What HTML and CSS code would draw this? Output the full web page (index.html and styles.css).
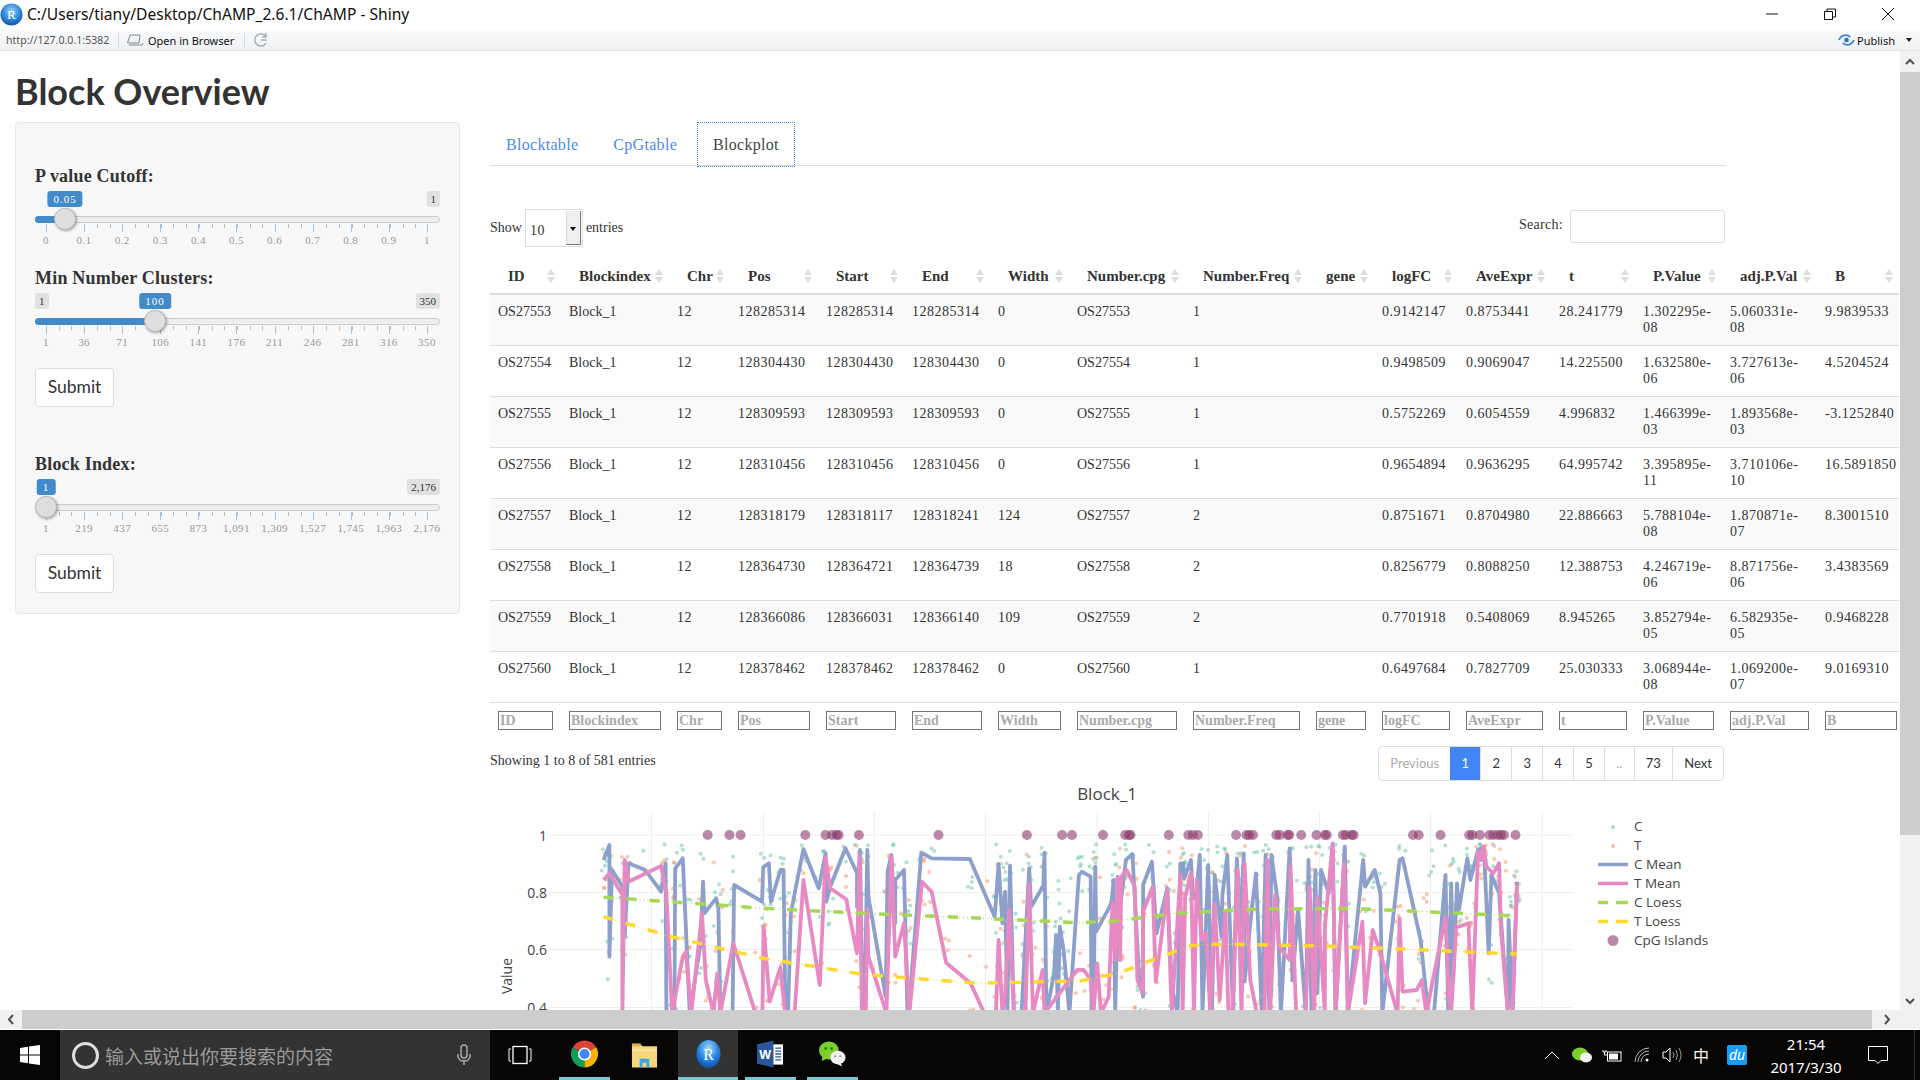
FILE: index.html
```html
<!DOCTYPE html>
<html lang="en">
<head>
    <meta charset="UTF-8">
    <title>ChAMP - Shiny</title>
    <link rel="stylesheet" href="styles.css">
</head>
<body>
    <!-- window chrome -->
    <div class="titlebar">
        <svg class="r-logo" viewBox="0 0 24 24"><defs><radialGradient id="rball" cx="50%" cy="35%" r="65%"><stop offset="0" stop-color="#9fd4f7"/><stop offset="0.6" stop-color="#2f86dc"/><stop offset="1" stop-color="#1553a8"/></radialGradient></defs><circle cx="12" cy="12" r="11.500" fill="url(#rball)"/><text x="12" y="17" text-anchor="middle" font-size="14" fill="#fff" font-family="Liberation Serif">R</text></svg>
        <span class="window-title">C:/Users/tiany/Desktop/ChAMP_2.6.1/ChAMP - Shiny</span>
        <div class="window-controls">
            <svg viewBox="0 0 14 14"><path d="M1 7h12" stroke="#111" stroke-width="1"/></svg>
            <svg viewBox="0 0 14 14"><path d="M1.500 4.500h8v8h-8zM4 4.500V2h8.500v8H9.500" fill="none" stroke="#111" stroke-width="1"/></svg>
            <svg viewBox="0 0 14 14"><path d="M1 1l12 12M13 1L1 13" stroke="#111" stroke-width="1"/></svg>
        </div>
    </div>
    <div class="toolbar">
        <span class="url">http://127.0.0.1:5382</span>
        <span class="tool-sep"></span>
        <svg class="tool-icon" viewBox="0 0 18 14"><path d="M4 2h10l-1 8H1.500zM3 12h13l1-2" fill="#eef2f6" stroke="#7d8a99" stroke-width="1"/></svg>
        <span class="tool-label">Open in Browser</span>
        <span class="tool-sep"></span>
        <svg class="tool-refresh" viewBox="0 0 16 16"><path d="M13 11a6 6 0 1 1 0-6M13 1v4H9" fill="none" stroke="#a4afbb" stroke-width="1.500"/><path d="M14 8H8" stroke="#a4afbb" stroke-width="1.500"/></svg>
        <div class="publish">
            <svg viewBox="0 0 18 12"><path d="M1 6c2-5 8-7 12-3M17 6c-2 5-8 7-12 3" fill="none" stroke="#4a86d4" stroke-width="1.800"/><circle cx="9" cy="6" r="2.500" fill="#2a6fd0"/></svg>
            <span>Publish</span>
            <i class="publish-caret"></i>
        </div>
    </div>

    <div class="window-body">
        <div class="viewport">
            <h1>Block Overview</h1>
            <div class="layout">
                <!-- sidebar -->
                <div class="well">
                    <div class="group first">
                        <label>P value Cutoff:</label>
                        <div class="slider">
                            <span class="tag max">1</span>
                            <span class="tag current" style="left:30px">0.05</span>
                            <div class="track"><div class="bar" style="width:30px"></div></div>
                            <div class="scale">
                                <span class="tick"><b>0</b></span><span class="tick"><b>0.1</b></span><span class="tick"><b>0.2</b></span><span class="tick"><b>0.3</b></span><span class="tick"><b>0.4</b></span><span class="tick"><b>0.5</b></span><span class="tick"><b>0.6</b></span><span class="tick"><b>0.7</b></span><span class="tick"><b>0.8</b></span><span class="tick"><b>0.9</b></span><span class="tick"><b>1</b></span>
                            </div>
                            <div class="handle" style="left:30px"></div>
                        </div>
                    </div>
                    <div class="group">
                        <label>Min Number Clusters:</label>
                        <div class="slider">
                            <span class="tag min">1</span>
                            <span class="tag max">350</span>
                            <span class="tag current" style="left:120px">100</span>
                            <div class="track"><div class="bar" style="width:120px"></div></div>
                            <div class="scale">
                                <span class="tick"><b>1</b></span><span class="tick"><b>36</b></span><span class="tick"><b>71</b></span><span class="tick"><b>106</b></span><span class="tick"><b>141</b></span><span class="tick"><b>176</b></span><span class="tick"><b>211</b></span><span class="tick"><b>246</b></span><span class="tick"><b>281</b></span><span class="tick"><b>316</b></span><span class="tick"><b>350</b></span>
                            </div>
                            <div class="handle" style="left:120px"></div>
                        </div>
                        <button class="submit">Submit</button>
                    </div>
                    <div class="group wide-top">
                        <label>Block Index:</label>
                        <div class="slider">
                            <span class="tag max">2,176</span>
                            <span class="tag current" style="left:11px">1</span>
                            <div class="track"></div>
                            <div class="scale">
                                <span class="tick"><b>1</b></span><span class="tick"><b>219</b></span><span class="tick"><b>437</b></span><span class="tick"><b>655</b></span><span class="tick"><b>873</b></span><span class="tick"><b>1,091</b></span><span class="tick"><b>1,309</b></span><span class="tick"><b>1,527</b></span><span class="tick"><b>1,745</b></span><span class="tick"><b>1,963</b></span><span class="tick"><b>2,176</b></span>
                            </div>
                            <div class="handle" style="left:11px"></div>
                        </div>
                        <button class="submit">Submit</button>
                    </div>
                </div>

                <!-- main panel -->
                <div class="main">
                    <ul class="tabs">
                        <li><a>Blocktable</a></li>
                        <li><a>CpGtable</a></li>
                        <li class="active"><a>Blockplot</a></li>
                    </ul>

                    <div class="dt-top">
                        <div class="dt-length">
                            <span>Show</span>
                            <div class="select"><span>10</span><i class="select-btn"></i></div>
                            <span>entries</span>
                        </div>
                        <div class="dt-search">
                            <span>Search:</span>
                            <div class="search-input"></div>
                        </div>
                    </div>

                    <table class="dt">
                        <colgroup><col><col><col><col><col><col><col><col><col><col><col><col><col><col><col><col></colgroup>
                        <thead>
                            <tr><th>ID</th><th>Blockindex</th><th>Chr</th><th>Pos</th><th>Start</th><th>End</th><th>Width</th><th>Number.cpg</th><th>Number.Freq</th><th>gene</th><th>logFC</th><th>AveExpr</th><th>t</th><th>P.Value</th><th>adj.P.Val</th><th>B</th></tr>
                        </thead>
                        <tbody>
                            <tr><td class="txt">OS27553</td><td class="txt">Block_1</td><td>12</td><td>128285314</td><td>128285314</td><td>128285314</td><td>0</td><td class="txt">OS27553</td><td>1</td><td></td><td>0.9142147</td><td>0.8753441</td><td>28.241779</td><td>1.302295e-08</td><td>5.060331e-08</td><td>9.9839533</td></tr>
                            <tr><td class="txt">OS27554</td><td class="txt">Block_1</td><td>12</td><td>128304430</td><td>128304430</td><td>128304430</td><td>0</td><td class="txt">OS27554</td><td>1</td><td></td><td>0.9498509</td><td>0.9069047</td><td>14.225500</td><td>1.632580e-06</td><td>3.727613e-06</td><td>4.5204524</td></tr>
                            <tr><td class="txt">OS27555</td><td class="txt">Block_1</td><td>12</td><td>128309593</td><td>128309593</td><td>128309593</td><td>0</td><td class="txt">OS27555</td><td>1</td><td></td><td>0.5752269</td><td>0.6054559</td><td>4.996832</td><td>1.466399e-03</td><td>1.893568e-03</td><td>-3.1252840</td></tr>
                            <tr><td class="txt">OS27556</td><td class="txt">Block_1</td><td>12</td><td>128310456</td><td>128310456</td><td>128310456</td><td>0</td><td class="txt">OS27556</td><td>1</td><td></td><td>0.9654894</td><td>0.9636295</td><td>64.995742</td><td>3.395895e-11</td><td>3.710106e-10</td><td>16.5891850</td></tr>
                            <tr><td class="txt">OS27557</td><td class="txt">Block_1</td><td>12</td><td>128318179</td><td>128318117</td><td>128318241</td><td>124</td><td class="txt">OS27557</td><td>2</td><td></td><td>0.8751671</td><td>0.8704980</td><td>22.886663</td><td>5.788104e-08</td><td>1.870871e-07</td><td>8.3001510</td></tr>
                            <tr><td class="txt">OS27558</td><td class="txt">Block_1</td><td>12</td><td>128364730</td><td>128364721</td><td>128364739</td><td>18</td><td class="txt">OS27558</td><td>2</td><td></td><td>0.8256779</td><td>0.8088250</td><td>12.388753</td><td>4.246719e-06</td><td>8.871756e-06</td><td>3.4383569</td></tr>
                            <tr><td class="txt">OS27559</td><td class="txt">Block_1</td><td>12</td><td>128366086</td><td>128366031</td><td>128366140</td><td>109</td><td class="txt">OS27559</td><td>2</td><td></td><td>0.7701918</td><td>0.5408069</td><td>8.945265</td><td>3.852794e-05</td><td>6.582935e-05</td><td>0.9468228</td></tr>
                            <tr><td class="txt">OS27560</td><td class="txt">Block_1</td><td>12</td><td>128378462</td><td>128378462</td><td>128378462</td><td>0</td><td class="txt">OS27560</td><td>1</td><td></td><td>0.6497684</td><td>0.7827709</td><td>25.030333</td><td>3.068944e-08</td><td>1.069200e-07</td><td>9.0169310</td></tr>
                        </tbody>
                        <tfoot>
                            <tr><td><input placeholder="ID"></td><td><input placeholder="Blockindex"></td><td><input placeholder="Chr"></td><td><input placeholder="Pos"></td><td><input placeholder="Start"></td><td><input placeholder="End"></td><td><input placeholder="Width"></td><td><input placeholder="Number.cpg"></td><td><input placeholder="Number.Freq"></td><td><input placeholder="gene"></td><td><input placeholder="logFC"></td><td><input placeholder="AveExpr"></td><td><input placeholder="t"></td><td><input placeholder="P.Value"></td><td><input placeholder="adj.P.Val"></td><td><input placeholder="B"></td></tr>
                        </tfoot>
                    </table>

                    <div class="dt-bottom">
                        <span class="dt-info">Showing 1 to 8 of 581 entries</span>
                        <div class="pager">
                            <a class="off">Previous</a><a class="on">1</a><a>2</a><a>3</a><a>4</a><a>5</a><a class="off">..</a><a>73</a><a>Next</a>
                        </div>
                    </div>

                    <!-- viewBox is in page pixels, series are added by plot.js -->
                    <svg class="plot" viewBox="490 775 1236 250">
                        <g class="grid">
                            <path d="M651.500 812V1025M763.500 812V1025M874.500 812V1025M985.500 812V1025M1097 812V1025M1208.500 812V1025M1319.500 812V1025M1430.500 812V1025M1542 812V1025"/>
                            <path d="M549 835H1573M549 892.500H1573M549 949.500H1573M549 1007.500H1573"/>
                        </g>
                        <text class="plot-title" x="1107" y="800" text-anchor="middle">Block_1</text>
                        <g class="axis" text-anchor="end">
                            <text x="547" y="841">1</text>
                            <text x="547" y="898">0.8</text>
                            <text x="547" y="955">0.6</text>
                            <text x="547" y="1013">0.4</text>
                        </g>
                        <text class="axis" transform="translate(512 976) rotate(-90)" text-anchor="middle">Value</text>
                        <g id="series"></g>
                        <g class="legend">
                            <circle cx="1613" cy="827" r="2" fill="#66c2a5" opacity=".6"/>
                            <circle cx="1613" cy="846" r="2" fill="#fc8d62" opacity=".6"/>
                            <path d="M1598 864.500h30" stroke="#8da0cb" stroke-width="3.500"/>
                            <path d="M1598 883.500h30" stroke="#e78ac3" stroke-width="3.500"/>
                            <path d="M1598 902.500h10M1616 902.500h12" stroke="#a6d854" stroke-width="3.500"/>
                            <path d="M1598 921.500h10M1616 921.500h12" stroke="#ffd92f" stroke-width="3.500"/>
                            <circle cx="1613" cy="940.500" r="5.500" fill="#8e3a6c" opacity=".6"/>
                            <text x="1634" y="831">C</text>
                            <text x="1634" y="850">T</text>
                            <text x="1634" y="868.500">C Mean</text>
                            <text x="1634" y="887.500">T Mean</text>
                            <text x="1634" y="906.500">C Loess</text>
                            <text x="1634" y="925.500">T Loess</text>
                            <text x="1634" y="944.500">CpG Islands</text>
                        </g>
                    </svg>
                </div>
            </div>
        </div>
        <div class="vscroll">
            <svg class="vs-arrow" viewBox="0 0 20 21"><path d="M6 13l4-4 4 4" fill="none" stroke="#505050" stroke-width="2"/></svg>
            <div class="vs-thumb"></div>
            <svg class="vs-arrow down" viewBox="0 0 20 19"><path d="M6 8l4 4 4-4" fill="none" stroke="#505050" stroke-width="2"/></svg>
        </div>
    </div>
    <div class="hscroll">
        <svg class="hs-arrow" viewBox="0 0 22 19"><path d="M13 5l-4 4.500 4 4.500" fill="none" stroke="#505050" stroke-width="2"/></svg>
        <div class="hs-thumb"></div>
        <svg class="hs-arrow right" viewBox="0 0 28 19"><path d="M13 5l4 4.500-4 4.500" fill="none" stroke="#505050" stroke-width="2"/></svg>
    </div>

    <!-- windows taskbar -->
    <div class="taskbar">
        <div class="start">
            <svg viewBox="0 0 20 20"><path d="M0 3l8-1.200V9.500H0zM9 1.600L20 0v9.500H9zM0 10.500h8v7.700L0 17zM9 10.500h11V20L9 18.400z" fill="#fff"/></svg>
        </div>
        <div class="search">
            <i class="cortana"></i>
            <span>输入或说出你要搜索的内容</span>
            <svg class="mic" viewBox="0 0 14 22"><rect x="4" y="1" width="6" height="13" rx="3" fill="none" stroke="#aaa" stroke-width="1.500"/><path d="M1 10v2c0 3 2.500 5 6 5s6-2 6-5v-2M7 17v4" fill="none" stroke="#aaa" stroke-width="1.500"/></svg>
        </div>
        <div class="slot task-view">
            <svg viewBox="0 0 24 20"><rect x="5" y="1.500" width="14" height="17" fill="none" stroke="#fff" stroke-width="1.300"/><path d="M3 4H1v12h2M21 4h2v12h-2" fill="none" stroke="#fff" stroke-width="1"/></svg>
        </div>
        <div class="slot open chrome">
            <svg viewBox="0 0 24 24"><path d="M12 12L1.600 6A12 12 0 0 1 22.400 6z" fill="#db4437"/><path d="M12 12L1.600 6A12 12 0 0 0 12 24z" fill="#0f9d58"/><path d="M12 12L22.400 6A12 12 0 0 1 12 24z" fill="#f4b400"/><circle cx="12" cy="12" r="5.800" fill="#fff"/><circle cx="12" cy="12" r="4.500" fill="#4285f4"/></svg>
        </div>
        <div class="slot folder">
            <svg viewBox="0 0 28 28"><path d="M1 3h9l2 2h15v22H1z" fill="#f5d67c"/><path d="M1 8h26v2H1z" fill="#fbe6a6"/><path d="M9 27V18h10v9h-3v-5h-4v5z" fill="#3fa7e0"/><rect x="1" y="2" width="9" height="3" fill="#e0b040"/></svg>
        </div>
        <div class="slot open active">
            <svg viewBox="0 0 24 28"><defs><radialGradient id="rball2" cx="50%" cy="30%" r="70%"><stop offset="0" stop-color="#a4d8fa"/><stop offset="0.6" stop-color="#2382e2"/><stop offset="1" stop-color="#1250a8"/></radialGradient></defs><ellipse cx="12" cy="14" rx="12" ry="14" fill="url(#rball2)"/><text x="12" y="20" text-anchor="middle" font-size="16" fill="#fff" font-family="Liberation Serif">R</text></svg>
        </div>
        <div class="slot open word">
            <svg viewBox="0 0 28 28"><path d="M0 4l17-4v28L0 24z" fill="#2b579a"/><path d="M17 4h10v21H17z" fill="#fff"/><path d="M19 8h6M19 11h6M19 14h6M19 17h6M19 20h6" stroke="#2b579a" stroke-width="1.300"/><text x="8.500" y="19" text-anchor="middle" font-size="13" font-weight="700" fill="#fff" font-family="Liberation Sans">W</text></svg>
        </div>
        <div class="slot open wechat">
            <svg viewBox="0 0 30 28"><ellipse cx="11" cy="10" rx="11" ry="10" fill="#7bd02e"/><path d="M4 16l-1 6 6-3z" fill="#7bd02e"/><circle cx="7.500" cy="8" r="1.500" fill="#2c6a10"/><circle cx="14" cy="8" r="1.500" fill="#2c6a10"/><ellipse cx="21" cy="18" rx="8.500" ry="7.500" fill="#f2f2f2"/><path d="M24 24l2 4-6-3z" fill="#f2f2f2"/><circle cx="18" cy="16.500" r="1.100" fill="#888"/><circle cx="23.500" cy="16.500" r="1.100" fill="#888"/></svg>
        </div>
        <div class="tray">
            <div class="tray-item"><svg viewBox="0 0 16 9" width="16" height="9"><path d="M1 8l7-7 7 7" fill="none" stroke="#fff" stroke-width="1"/></svg></div>
            <div class="tray-item"><svg viewBox="0 0 20 16" width="20" height="16"><ellipse cx="8" cy="7" rx="8" ry="6.500" fill="#7bd02e"/><ellipse cx="14" cy="10.500" rx="6" ry="5" fill="#f2f2f2"/></svg></div>
            <div class="tray-item"><svg viewBox="0 0 20 13" width="20" height="13"><rect x="5.500" y="3" width="13.500" height="9" fill="#000" stroke="#fff" stroke-width="1"/><rect x="7" y="4.500" width="9" height="6" fill="#fff"/><path d="M1 1v2h3V1M2.500 3v3h3" fill="none" stroke="#fff" stroke-width="1"/></svg></div>
            <div class="tray-item"><svg viewBox="0 0 16 16" width="16" height="16"><path d="M1 15a14 14 0 0 1 14-14M4 15a11 11 0 0 1 11-11M7 15a8 8 0 0 1 8-8" fill="none" stroke="#bbb" stroke-width="1"/><circle cx="13" cy="13" r="1.500" fill="#fff"/></svg></div>
            <div class="tray-item"><svg viewBox="0 0 20 16" width="20" height="16"><path d="M1 5h3l4-4v14l-4-4H1z" fill="none" stroke="#fff" stroke-width="1"/><path d="M11 5q2 3 0 6M14 3q3 5 0 10M17 1q4 7 0 14" fill="none" stroke="#999" stroke-width="1"/></svg></div>
            <div class="tray-item ime">中</div>
            <div class="tray-item du"><span>du</span></div>
            <div class="clock"><span>21:54</span><span>2017/3/30</span></div>
            <div class="tray-item notify"><svg viewBox="0 0 20 18" width="20" height="18"><path d="M.5.500h19v14H13l-3 3-3-3H.5z" fill="none" stroke="#fff" stroke-width="1"/></svg></div>
        </div>
    </div>

    <script src="plot.js"></script>
</body>
</html>
```

FILE: styles.css
```css
/* page */
html, body {
    margin: 0;
    padding: 0;
}

body {
    width: 1920px;
    height: 1080px;
    overflow: hidden;
    display: flex;
    flex-direction: column;
    background: #fff;
    color: #333;
    font-family: "Liberation Serif", serif;
}

/* window title + rstudio toolbar */
.titlebar {
    height: 28px;
    padding-bottom: 2px;
    flex: none;
    display: flex;
    align-items: center;
    font-family: "Noto Sans", sans-serif;
    font-size: 15.600px;
    color: #111;
}

.r-logo {
    width: 23px;
    height: 23px;
}

.window-title {
    margin-left: 4px;
}

.window-controls {
    margin-left: auto;
    display: flex;
    gap: 44px;
    padding-right: 25px;
}

.window-controls svg {
    width: 14px;
    height: 14px;
}

.toolbar {
    height: 21px;
    flex: none;
    box-sizing: border-box;
    display: flex;
    align-items: center;
    background: linear-gradient(#f8f9fa, #eff1f3);
    border-bottom: 1px solid #e4e4e4;
    font-family: "Noto Sans", sans-serif;
    font-size: 11px;
}

.url {
    margin-left: 6px;
    color: #555;
    width: 106px;
    font-size: 10.600px;
}

.tool-sep {
    width: 1px;
    height: 15px;
    background: #d5d8dc;
    margin-left: 6px;
}

.tool-icon {
    width: 18px;
    height: 14px;
    margin-left: 7px;
}

.tool-label {
    margin-left: 4px;
    width: 90px;
    color: #111;
}

.tool-refresh {
    width: 16px;
    height: 16px;
    margin-left: 8px;
}

.publish {
    margin-left: auto;
    display: flex;
    align-items: center;
    padding-right: 8px;
    color: #111;
}

.publish svg {
    width: 17px;
    height: 12px;
    margin-right: 2px;
}

.publish-caret {
    width: 0;
    height: 0;
    margin-left: 11px;
    border: 3.500px solid transparent;
    border-top: 4px solid #222;
    border-bottom: 0;
}

/* shiny page */
.window-body {
    height: 959px;
    flex: none;
    display: flex;
}

.viewport {
    width: 1900px;
    height: 959px;
    overflow: hidden;
    box-sizing: border-box;
    padding: 20px 0 0 15px;
}

h1 {
    margin: 0 0 11px;
    height: 40px;
    line-height: 40px;
    font-family: Lato, sans-serif;
    font-size: 36px;
    font-weight: 700;
    color: #333;
}

.layout {
    display: flex;
    align-items: flex-start;
}

.well {
    width: 445px;
    height: 492px;
    flex: none;
    box-sizing: border-box;
    padding: 0 19px;
    background: #f7f7f7;
    border: 1px solid #e6e6e6;
    border-radius: 4px;
}

.group {
    margin-top: 12px;
}

.group.first {
    margin-top: 42px;
}

.group.wide-top {
    margin-top: 46px;
}

.group label {
    display: block;
    height: 20px;
    line-height: 22px;
    font-size: 18px;
    font-weight: 700;
    letter-spacing: .2px;
    color: #333;
    margin-bottom: 6px;
}

/* range sliders */
.slider {
    position: relative;
    height: 64px;
    width: 405px;
}

.tag {
    position: absolute;
    top: 0;
    height: 16px;
    line-height: 16px;
    padding: 0 4px;
    font-size: 11px;
    border-radius: 3px;
    background: #e1e1e1;
    color: #333;
}

.tag.min {
    left: 0;
}

.tag.max {
    right: 0;
}

.tag.current {
    background: #428bca;
    color: #fff;
    padding: 0 6px;
    letter-spacing: 1px;
    transform: translateX(-50%);
}

.track {
    position: absolute;
    top: 25px;
    left: 0;
    right: 0;
    height: 7px;
    box-sizing: border-box;
    background: #eee;
    border: 1px solid #ccc;
    border-radius: 4px;
}

.bar {
    height: 7px;
    margin: -1px 0 0 -1px;
    background: #428bca;
    border-radius: 4px 0 0 4px;
}

.handle {
    position: absolute;
    top: 17px;
    width: 22px;
    height: 22px;
    margin-left: -11px;
    box-sizing: border-box;
    border-radius: 50%;
    background: #dedede;
    border: 1px solid #bbb;
    box-shadow: 1px 1px 3px rgba(0, 0, 0, .35);
}

.scale {
    position: absolute;
    top: 33px;
    left: 11px;
    right: 12px;
    height: 4px;
    display: flex;
    justify-content: space-between;
    background: repeating-linear-gradient(90deg, #bbb 0 1px, transparent 1px 12.733px);
}

.tick {
    position: relative;
    width: 1px;
    height: 8px;
    background: #a2c3df;
}

.tick b {
    position: absolute;
    top: 10px;
    left: 0;
    transform: translateX(-50%);
    font-size: 11px;
    font-weight: 400;
    line-height: 12px;
    letter-spacing: .4px;
    color: #999;
    white-space: nowrap;
}

.submit {
    display: block;
    width: 79px;
    height: 39px;
    margin-top: 11px;
    padding: 0 0 2px;
    background: #fff;
    border: 1px solid #ddd;
    border-radius: 4px;
    font-family: Lato, sans-serif;
    font-size: 17.500px;
    color: #333;
}

/* main panel */
.main {
    width: 1236px;
    flex: none;
    margin-left: 30px;
}

.tabs {
    list-style: none;
    margin: 0;
    padding: 0 0 0 1px;
    height: 44px;
    box-sizing: border-box;
    display: flex;
    align-items: flex-start;
    border-bottom: 1px solid #ddd;
}

.tabs a {
    display: block;
    height: 45px;
    line-height: 46px;
    box-sizing: border-box;
    padding: 0 15px;
    font-size: 16px;
    letter-spacing: .3px;
    color: #4d8af0;
}

.tabs li:nth-child(2) a {
    padding-left: 20px;
    padding-right: 20px;
}

.tabs .active a {
    color: #444;
    line-height: 44px;
    border: 1px dotted #2e86e8;
}

.dt-top {
    margin-top: 44px;
    height: 38px;
    display: flex;
    justify-content: space-between;
    align-items: flex-start;
    font-size: 14px;
    padding-right: 1px;
}

.dt-length {
    display: flex;
    align-items: center;
    gap: 3px;
    height: 36px;
}

.select {
    width: 58px;
    height: 38px;
    flex: none;
    box-sizing: border-box;
    border: 1px solid #ddd;
    background: #fff;
    position: relative;
    line-height: 42px;
    padding-left: 4px;
    letter-spacing: .5px;
}

.select-btn {
    position: absolute;
    top: 1px;
    right: 1px;
    bottom: 1px;
    width: 15px;
    background: #efefef;
    border-right: 1px solid #777;
    border-bottom: 1px solid #777;
    border-left: 1px solid #ddd;
    box-sizing: border-box;
}

.select-btn::after {
    content: "";
    position: absolute;
    top: 16px;
    left: 3px;
    border: 3.500px solid transparent;
    border-top: 4px solid #111;
    border-bottom: 0;
}

.dt-search {
    display: flex;
    align-items: center;
    gap: 7px;
    height: 33px;
    letter-spacing: .3px;
}

.dt-search span {
    margin-top: -4px;
}

.search-input {
    width: 155px;
    height: 33px;
    box-sizing: border-box;
    background: #fff;
    border: 1px solid #ddd;
    border-radius: 3px;
}

/* datatable */
.dt {
    table-layout: fixed;
    width: 1409px;
    margin-top: 10px;
    border-collapse: separate;
    border-spacing: 0;
    font-size: 14px;
    color: #333;
}

.dt col:nth-child(1) { width: 71px; }
.dt col:nth-child(2) { width: 108px; }
.dt col:nth-child(3) { width: 61px; }
.dt col:nth-child(4) { width: 88px; }
.dt col:nth-child(5) { width: 86px; }
.dt col:nth-child(6) { width: 86px; }
.dt col:nth-child(7) { width: 79px; }
.dt col:nth-child(8) { width: 116px; }
.dt col:nth-child(9) { width: 123px; }
.dt col:nth-child(10) { width: 66px; }
.dt col:nth-child(11) { width: 84px; }
.dt col:nth-child(12) { width: 93px; }
.dt col:nth-child(13) { width: 84px; }
.dt col:nth-child(14) { width: 87px; }
.dt col:nth-child(15) { width: 95px; }
.dt col:nth-child(16) { width: 82px; }

.dt th {
    position: relative;
    height: 37px;
    box-sizing: border-box;
    padding: 2px 0 0 18px;
    text-align: left;
    font-size: 15px;
    font-weight: 700;
    white-space: nowrap;
    border-bottom: 2px solid #ddd;
}

/* sort arrows */
.dt th::before,
.dt th::after {
    content: "";
    position: absolute;
    right: 6px;
    border: 4px solid transparent;
}

.dt th::before {
    top: 11px;
    border-top: 0;
    border-bottom: 6px solid #ddd;
}

.dt th::after {
    top: 19px;
    border-bottom: 0;
    border-top: 6px solid #ddd;
}

.dt tbody td {
    height: 51px;
    box-sizing: border-box;
    padding: 9px 8px;
    line-height: 16px;
    vertical-align: top;
    letter-spacing: .5px;
    border-bottom: 1px solid #ddd;
}

.dt tbody td.txt {
    letter-spacing: 0;
}

.dt tbody td:last-child {
    padding-right: 0;
    white-space: nowrap;
}

.dt tbody tr:nth-child(odd) td {
    background: #f9f9f9;
}

.dt tfoot td {
    padding: 8px;
}

.dt tfoot td:last-child {
    padding-right: 2px;
}

.dt input {
    display: block;
    width: 100%;
    height: 19px;
    box-sizing: border-box;
    margin: 0;
    padding: 0 1px;
    border: 1px solid #767676;
    background: #fff;
    font-family: "Liberation Serif", serif;
    font-size: 14px;
    font-weight: 700;
}

.dt input::placeholder {
    color: #aaa;
}

.dt-bottom {
    margin-top: 8px;
    padding-right: 2px;
    display: flex;
    justify-content: space-between;
    align-items: flex-start;
    font-size: 14px;
}

.dt-info {
    margin-top: 7px;
}

.pager {
    display: flex;
    height: 35px;
    box-sizing: border-box;
    border: 1px solid #ddd;
    border-radius: 4px;
    font-family: Lato, sans-serif;
    font-size: 13px;
    line-height: 33px;
    color: #333;
}

.pager a {
    padding: 0 11.200px;
    border-left: 1px solid #ddd;
}

.pager a:first-child {
    border-left: 0;
}

.pager a.off {
    color: #aaa;
}

.pager a.on {
    background: #4285f4;
    color: #fff;
    border-left: 0;
}

/* plotly chart */
.plot {
    display: block;
    width: 1236px;
    height: 250px;
    margin-top: -6px;
    overflow: hidden;
}

.grid path {
    fill: none;
    stroke: #eee;
    stroke-width: 1;
}

.plot text {
    font-family: "Open Sans", sans-serif;
    fill: #444;
}

.plot .plot-title {
    font-size: 17px;
}

.plot .axis,
.plot .axis text {
    font-size: 14px;
}

.legend text {
    font-size: 13.500px;
}

/* browser scrollbars */
.vscroll {
    width: 20px;
    flex: none;
    display: flex;
    flex-direction: column;
    background: #f1f1f1;
}

.vs-arrow {
    width: 20px;
    height: 21px;
    flex: none;
}

.vs-arrow.down {
    margin-top: auto;
    height: 19px;
}

.vs-thumb {
    height: 763px;
    background: #cdcdcd;
}

.hscroll {
    height: 19px;
    flex: none;
    margin-bottom: 1px;
    display: flex;
    background: #f1f1f1;
}

.hs-arrow {
    width: 22px;
    height: 19px;
    flex: none;
}

.hs-arrow.right {
    width: 28px;
}

.hs-thumb {
    width: 1850px;
    background: #cdcdcd;
}

/* taskbar */
.taskbar {
    height: 50px;
    flex: none;
    display: flex;
    background: #080505;
    color: #fff;
}

.start {
    width: 60px;
    display: flex;
    align-items: center;
    justify-content: center;
}

.start svg {
    width: 20px;
    height: 20px;
}

.search {
    width: 430px;
    background: #333;
    display: flex;
    align-items: center;
    box-sizing: border-box;
    padding-left: 12px;
    font-family: "Noto Sans CJK SC", sans-serif;
    font-size: 19px;
    color: #999;
}

.cortana {
    width: 27px;
    height: 27px;
    box-sizing: border-box;
    border: 3px solid #ddd;
    border-radius: 50%;
}

.search span {
    margin-left: 6px;
    white-space: nowrap;
}

.mic {
    width: 14px;
    height: 22px;
    margin-left: 124px;
}

.slot {
    width: 51px;
    height: 50px;
    box-sizing: border-box;
    display: flex;
    align-items: center;
    justify-content: center;
}

.slot svg {
    width: 27px;
    height: 28px;
}

.task-view {
    width: 59px;
}

.task-view svg {
    width: 24px;
    height: 20px;
}

.slot.open {
    border-bottom: 3px solid #76c9d0;
}

.slot.chrome {
    margin-left: 10px;
}

.slot.folder {
    width: 68px;
}

.slot.active {
    width: 60px;
    background: #333;
}

.slot.word {
    margin-left: 7px;
}

.slot.wechat {
    margin-left: 11px;
}

.tray {
    margin-left: auto;
    margin-right: 5px;
    display: flex;
    align-items: center;
    padding-right: 9px;
    border-right: 1px solid #333;
    height: 50px;
    font-family: "Noto Sans", sans-serif;
}

.tray-item {
    width: 30px;
    display: flex;
    justify-content: center;
    align-items: center;
}

.ime {
    width: 28px;
    font-family: "Noto Sans CJK SC", sans-serif;
    font-size: 16px;
}

.du {
    width: 44px;
}

.du span {
    width: 20px;
    height: 20px;
    line-height: 19px;
    text-align: center;
    border-radius: 2px;
    background: #1a9cf0;
    font-size: 14px;
    font-style: italic;
}

.clock {
    width: 90px;
    margin-left: 2px;
    display: flex;
    flex-direction: column;
    align-items: center;
    gap: 3px;
    font-size: 15px;
    line-height: 20px;
}

.notify {
    width: 54px;
}
```

FILE: plot.js
```js
// C = blue mean line, T = pink mean line. points are [x, y] traced off the figure
const blueA = [323,240,338,195,338,530,345,270,372,320,378,470,388,250,432,270,473,335,485,250,487,700,508,700,510,265,530,235,548,700,575,500,583,305,586,400,617,355,623,385,628,700,660,700,664,315,737,365,740,262,755,250,760,365,785,270,793,270,798,700,805,700,812,400,845,207,885,325,903,220,905,365,915,320,955,205,985,280,985,380,993,210,1000,700,1005,700,1012,210,1015,350,1060,650,1065,275,1075,225,1085,430,1085,300,1108,270,1117,700,1120,700,1153,218,1180,235,1280,237,1345,410,1355,252,1365,430,1372,335,1378,700,1385,257,1395,700,1415,700,1435,265,1440,380,1472,317,1475,218,1480,700,1500,580,1505,465,1510,700,1515,440,1525,510,1540,700,1565,285];
const blueB = [5,275,28,290,30,700,35,700,40,260,42,455,82,370,88,300,92,700,100,300,105,380,120,240,137,222,155,600,165,650,165,315,188,245,200,460,228,325,240,620,255,700,262,250,270,250,272,295,290,240,295,355,303,350,313,225,320,700,335,255,345,700,352,285,370,470,372,345,385,225,400,700,410,235,418,440,428,220,430,605,445,430,460,280,475,700,485,225,495,700,500,225,515,350,525,700,548,205,555,600,570,390,590,700,597,240,605,700,615,270,620,640,630,270,650,340,660,200,668,700,692,200,700,700,740,240,745,320,770,270,785,340,790,700,835,240,843,235,890,480,910,700,925,700,955,285,962,700,970,310,975,600,985,310,990,390,1012,235,1020,300,1040,210,1055,200,1068,520,1075,285,1095,340,1118,700,1120,420,1130,700,1142,305];
const pinkA = [323,300,338,280,372,345,372,700,378,240,388,305,473,258,487,340,502,700,530,530,538,515,552,700,580,400,590,600,610,700,620,580,628,700,662,490,720,700,738,700,741,440,757,665,785,562,797,700,822,700,845,300,888,615,903,232,915,325,957,358,985,520,992,225,998,700,1008,700,1012,390,1015,530,1062,700,1075,230,1085,530,1108,430,1122,700,1155,305,1180,335,1218,548,1282,610,1318,700,1348,700,1355,480,1365,700,1372,650,1383,390,1395,700,1425,700,1435,310,1445,700,1470,570,1475,700,1560,570];
const pinkB = [10,570,28,600,35,700,45,550,55,700,75,650,85,370,92,540,98,290,105,540,108,290,122,270,143,320,150,600,165,640,165,395,190,320,198,605,228,330,240,700,262,285,268,700,275,350,290,280,298,700,305,300,318,480,330,460,340,700,352,370,365,660,380,400,388,700,398,700,412,270,422,700,430,250,445,600,462,700,482,700,490,240,497,700,510,345,520,500,548,540,550,260,565,700,590,700,600,320,612,700,620,350,640,700,640,440,660,190,668,700,690,250,700,700,738,425,745,670,765,450,785,520,830,700,835,415,843,635,880,630,893,600,905,700,955,410,963,640,970,700,983,440,990,440,1015,430,1025,700,1040,215,1048,240,1055,200,1062,260,1080,280,1095,250,1100,450,1118,700,1130,700,1142,315];
const greenA = [323,352,620,375,740,385,1000,400,1250,412,1568,428];
const greenB = [100,422,250,400,450,388,700,385,900,395,1142,408];
const yellowA = [323,410,500,470,740,535,1000,583,1300,610,1568,603];
const yellowB = [100,580,200,535,290,497,350,492,600,497,800,505,1000,515,1142,522];
const islandsA = [595,652,681,850,903,920,932,937,990,1198,1429,1521,1547];
const islandsB = [60,118,128,132,232,283,295,308,408,435,442,452,513,522,543,547,578,618,640,645,687,695,710,715,870,885,942,1017,1025,1045,1070,1080,1092,1100,1108,1138];

const NS = "http://www.w3.org/2000/svg";
const series = document.getElementById("series");

// crops were 2.613 wide / 3 high per page pixel
function toPage(list, left) {
    const out = [];
    for (let i = 0; i < list.length; i += 2) {
        out.push([left + list[i] / 2.613, 780 + list[i + 1] / 3]);
    }
    return out;
}

function add(tag, attrs) {
    const el = document.createElementNS(NS, tag);
    for (const key in attrs) {
        el.setAttribute(key, attrs[key]);
    }
    series.appendChild(el);
}

function line(points, color, width, dash) {
    const attrs = {
        points: points.map(p => p[0].toFixed(1) + "," + p[1].toFixed(1)).join(" "),
        fill: "none",
        stroke: color,
        "stroke-width": width,
        "stroke-linejoin": "round"
    };
    if (dash) attrs["stroke-dasharray"] = dash;
    add("polyline", attrs);
}

// small fixed generator so every render has the same dots
let seed = 20170330;
function rand() {
    seed = (seed * 16807) % 2147483647;
    return seed / 2147483647;
}

function dots(points, color) {
    points.forEach(p => {
        const count = 2 + Math.floor(rand() * 3);
        for (let i = 0; i < count; i++) {
            let y = p[1] > 1005 ? 850 + rand() * 160 : p[1] + (rand() - 0.5) * 60;
            if (y < 844) y = 844 + rand() * 12;
            add("circle", {
                cx: (p[0] + (rand() - 0.5) * 6).toFixed(1),
                cy: y.toFixed(1),
                r: 2,
                fill: color,
                opacity: 0.5
            });
        }
    });
}

const blue = toPage(blueA, 480).concat(toPage(blueB, 1080));
const pink = toPage(pinkA, 480).concat(toPage(pinkB, 1080));
const green = toPage(greenA, 480).concat(toPage(greenB, 1080));
const yellow = toPage(yellowA, 480).concat(toPage(yellowB, 1080));

dots(blue, "#66c2a5");
dots(pink, "#fc8d62");

line(blue, "#8da0cb", 3.8);
line(pink, "#e78ac3", 3.8);

[[green, "#a6d854"], [yellow, "#ffd92f"]].forEach(item => {
    line(item[0], item[1], 1, "1 3");
    line(item[0], item[1], 3.5, "10 13");
});

islandsA.map(x => 480 + x / 2.613).concat(islandsB.map(x => 1080 + x / 2.613)).forEach(x => {
    add("circle", { cx: x.toFixed(1), cy: 835, r: 5, fill: "#8e3a6c", opacity: 0.6 });
});
```
